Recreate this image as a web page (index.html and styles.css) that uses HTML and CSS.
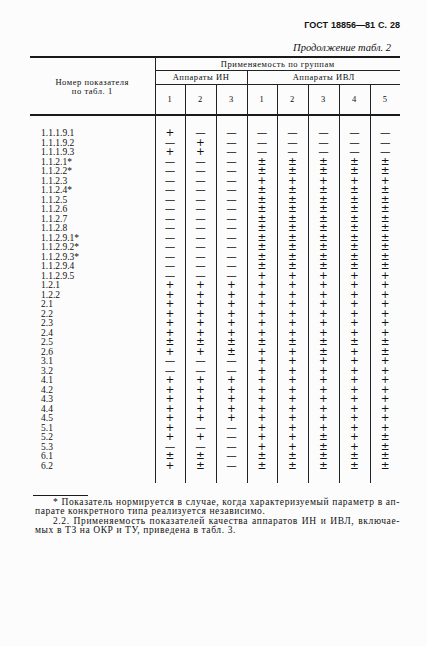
FILE: index.html
```html
<!DOCTYPE html>
<html lang="ru">
<head>
<meta charset="utf-8">
<title>ГОСТ 18856—81 С. 28</title>
<link rel="stylesheet" href="styles.css">
</head>
<body>
<div class="page">
  <div class="runhead">ГОСТ 18856—81 С. 28</div>
  <div class="cont">Продолжение табл. 2</div>
  <table class="tab">
    <colgroup>
      <col class="c0"><col class="c30"><col class="c31"><col class="c31"><col class="c30"><col class="c31"><col class="c31"><col class="c31"><col class="c30">
    </colgroup>
    <thead>
      <tr class="ra">
        <th class="lab" rowspan="3">Номер показателя<br>по табл. 1</th>
        <th class="grp" colspan="8">Применяемость по группам</th>
      </tr>
      <tr class="rb">
        <th colspan="3">Аппараты ИН</th>
        <th colspan="5">Аппараты ИВЛ</th>
      </tr>
      <tr class="rc">
        <th>1</th><th>2</th><th>3</th><th>1</th><th>2</th><th>3</th><th>4</th><th>5</th>
      </tr>
    </thead>
    <tbody>
      <tr><td>1.1.1.9.1</td><td>+</td><td>—</td><td>—</td><td>—</td><td>—</td><td>—</td><td>—</td><td>—</td></tr>
      <tr><td>1.1.1.9.2</td><td>—</td><td>+</td><td>—</td><td>—</td><td>—</td><td>—</td><td>—</td><td>—</td></tr>
      <tr><td>1.1.1.9.3</td><td>+</td><td>+</td><td>—</td><td>—</td><td>—</td><td>—</td><td>—</td><td>—</td></tr>
      <tr><td>1.1.2.1*</td><td>—</td><td>—</td><td>—</td><td>±</td><td>±</td><td>±</td><td>±</td><td>±</td></tr>
      <tr><td>1.1.2.2*</td><td>—</td><td>—</td><td>—</td><td>±</td><td>±</td><td>±</td><td>±</td><td>±</td></tr>
      <tr><td>1.1.2.3</td><td>—</td><td>—</td><td>—</td><td>+</td><td>+</td><td>+</td><td>+</td><td>+</td></tr>
      <tr><td>1.1.2.4*</td><td>—</td><td>—</td><td>—</td><td>±</td><td>±</td><td>±</td><td>±</td><td>±</td></tr>
      <tr><td>1.1.2.5</td><td>—</td><td>—</td><td>—</td><td>±</td><td>±</td><td>±</td><td>±</td><td>±</td></tr>
      <tr><td>1.1.2.6</td><td>—</td><td>—</td><td>—</td><td>±</td><td>±</td><td>±</td><td>±</td><td>±</td></tr>
      <tr><td>1.1.2.7</td><td>—</td><td>—</td><td>—</td><td>±</td><td>±</td><td>±</td><td>±</td><td>±</td></tr>
      <tr><td>1.1.2.8</td><td>—</td><td>—</td><td>—</td><td>±</td><td>±</td><td>±</td><td>±</td><td>±</td></tr>
      <tr><td>1.1.2.9.1*</td><td>—</td><td>—</td><td>—</td><td>±</td><td>±</td><td>±</td><td>±</td><td>±</td></tr>
      <tr><td>1.1.2.9.2*</td><td>—</td><td>—</td><td>—</td><td>±</td><td>±</td><td>±</td><td>±</td><td>±</td></tr>
      <tr><td>1.1.2.9.3*</td><td>—</td><td>—</td><td>—</td><td>±</td><td>±</td><td>±</td><td>±</td><td>±</td></tr>
      <tr><td>1.1.2.9.4</td><td>—</td><td>—</td><td>—</td><td>±</td><td>±</td><td>±</td><td>±</td><td>±</td></tr>
      <tr><td>1.1.2.9.5</td><td>—</td><td>—</td><td>—</td><td>+</td><td>+</td><td>+</td><td>+</td><td>+</td></tr>
      <tr><td>1.2.1</td><td>+</td><td>+</td><td>+</td><td>+</td><td>+</td><td>+</td><td>+</td><td>+</td></tr>
      <tr><td>1.2.2</td><td>+</td><td>+</td><td>+</td><td>+</td><td>+</td><td>+</td><td>+</td><td>+</td></tr>
      <tr><td>2.1</td><td>+</td><td>+</td><td>+</td><td>+</td><td>+</td><td>+</td><td>+</td><td>+</td></tr>
      <tr><td>2.2</td><td>+</td><td>+</td><td>+</td><td>+</td><td>+</td><td>+</td><td>+</td><td>+</td></tr>
      <tr><td>2.3</td><td>+</td><td>+</td><td>+</td><td>+</td><td>+</td><td>+</td><td>+</td><td>+</td></tr>
      <tr><td>2.4</td><td>+</td><td>+</td><td>+</td><td>+</td><td>+</td><td>+</td><td>+</td><td>+</td></tr>
      <tr><td>2.5</td><td>±</td><td>±</td><td>±</td><td>±</td><td>±</td><td>±</td><td>±</td><td>±</td></tr>
      <tr><td>2.6</td><td>+</td><td>+</td><td>±</td><td>+</td><td>+</td><td>±</td><td>+</td><td>±</td></tr>
      <tr><td>3.1</td><td>—</td><td>—</td><td>—</td><td>+</td><td>+</td><td>+</td><td>+</td><td>+</td></tr>
      <tr><td>3.2</td><td>—</td><td>—</td><td>—</td><td>+</td><td>+</td><td>+</td><td>+</td><td>+</td></tr>
      <tr><td>4.1</td><td>+</td><td>+</td><td>+</td><td>+</td><td>+</td><td>+</td><td>+</td><td>+</td></tr>
      <tr><td>4.2</td><td>+</td><td>+</td><td>+</td><td>+</td><td>+</td><td>+</td><td>+</td><td>+</td></tr>
      <tr><td>4.3</td><td>+</td><td>+</td><td>+</td><td>+</td><td>+</td><td>+</td><td>+</td><td>+</td></tr>
      <tr><td>4.4</td><td>+</td><td>+</td><td>+</td><td>+</td><td>+</td><td>+</td><td>+</td><td>+</td></tr>
      <tr><td>4.5</td><td>+</td><td>+</td><td>+</td><td>+</td><td>+</td><td>+</td><td>+</td><td>+</td></tr>
      <tr><td>5.1</td><td>+</td><td>—</td><td>—</td><td>+</td><td>+</td><td>+</td><td>+</td><td>+</td></tr>
      <tr><td>5.2</td><td>+</td><td>+</td><td>—</td><td>+</td><td>+</td><td>±</td><td>+</td><td>±</td></tr>
      <tr><td>5.3</td><td>—</td><td>—</td><td>—</td><td>+</td><td>+</td><td>±</td><td>+</td><td>±</td></tr>
      <tr><td>6.1</td><td>±</td><td>±</td><td>—</td><td>±</td><td>±</td><td>±</td><td>±</td><td>±</td></tr>
      <tr><td>6.2</td><td>+</td><td>±</td><td>—</td><td>±</td><td>±</td><td>±</td><td>±</td><td>±</td></tr>
    </tbody>
  </table>
  <div class="notes">
    <div class="rule"></div>
    <p class="ln full ind">* Показатель нормируется в случае, когда характеризуемый параметр в ап-</p>
    <p class="ln">парате конкретного типа реализуется независимо.</p>
    <p class="ln full ind">2.2. Применяемость показателей качества аппаратов ИН и ИВЛ, включае-</p>
    <p class="ln">мых в ТЗ на ОКР и ТУ, приведена в табл. 3.</p>
  </div>
</div>
</body>
</html>
```

FILE: styles.css
```css
html, body {
  margin: 0;
  padding: 0;
  background: #fcfcfc;
}

.page {
  width: 427px;
  height: 646px;
  box-sizing: border-box;
  padding: 19px 27px 0 30px;
  font-family: "Liberation Serif", "Times New Roman", serif;
  color: #111;
}

.runhead {
  font-family: "Liberation Sans", Arial, sans-serif;
  font-weight: bold;
  font-size: 9px;
  line-height: 12px;
  word-spacing: 0.5px;
  text-align: right;
}

.cont {
  margin-top: 11px;
  font-style: italic;
  font-size: 10.5px;
  line-height: 12px;
  text-align: right;
  padding-right: 9px;
}

.tab {
  margin-top: 2px;
  width: 370px;
  border-collapse: collapse;
  table-layout: fixed;
  border-top: 2px solid #1a1a1a;
}

.c0 { width: 125px; }
.c30 { width: 30px; }
.c31 { width: 31px; }

.tab th {
  font-weight: normal;
  font-size: 8.5px;
  letter-spacing: 0.55px;
  padding: 0;
  text-align: center;
  vertical-align: middle;
  border-left: 1px solid #222;
  color: #0c0c0c;
}

.tab th.lab {
  border-left: none;
  line-height: 9.5px;
  border-bottom: 2px solid #1a1a1a;
  padding-top: 2px;
}

.ra th.grp {
  height: 12px;
  line-height: 12px;
  border-bottom: 1px solid #222;
}

.rb th {
  height: 13px;
  line-height: 13px;
  border-bottom: 1px solid #222;
}

.rc th {
  height: 29px;
  line-height: 29px;
  border-bottom: 2px solid #1a1a1a;
}

.tab td {
  padding: 4px 0 0 0;
  height: 5.5px;
  line-height: 5.5px;
  text-align: center;
  vertical-align: top;
  font-family: "DejaVu Sans", sans-serif;
  font-size: 10.5px;
  border-left: 1px solid #222;
  white-space: nowrap;
}

.tab td:first-child {
  border-left: none;
  text-align: left;
  padding: 5px 0 0 11px;
  height: 4.5px;
  line-height: 4.5px;
  font-family: "Liberation Serif", "Times New Roman", serif;
  font-size: 9.5px;
}

.tab tbody tr:first-child td {
  padding-top: 14px;
}

.tab tbody tr:first-child td:first-child {
  padding-top: 14.5px;
}

.tab tbody tr:last-child td {
  padding-bottom: 15px;
}

.notes {
  margin-top: 12px;
  padding-left: 5px;
  width: 365px;
}

.rule {
  width: 55px;
  margin-left: -2px;
  border-top: 1.5px solid #1a1a1a;
  margin-bottom: 2px;
}

.ln {
  margin: 0;
  font-size: 9.5px;
  line-height: 9.3px;
  letter-spacing: 0.6px;
  white-space: nowrap;
}

.ln.full {
  text-align: justify;
  text-align-last: justify;
  white-space: normal;
}

.ln.ind {
  text-indent: 18px;
}
```
